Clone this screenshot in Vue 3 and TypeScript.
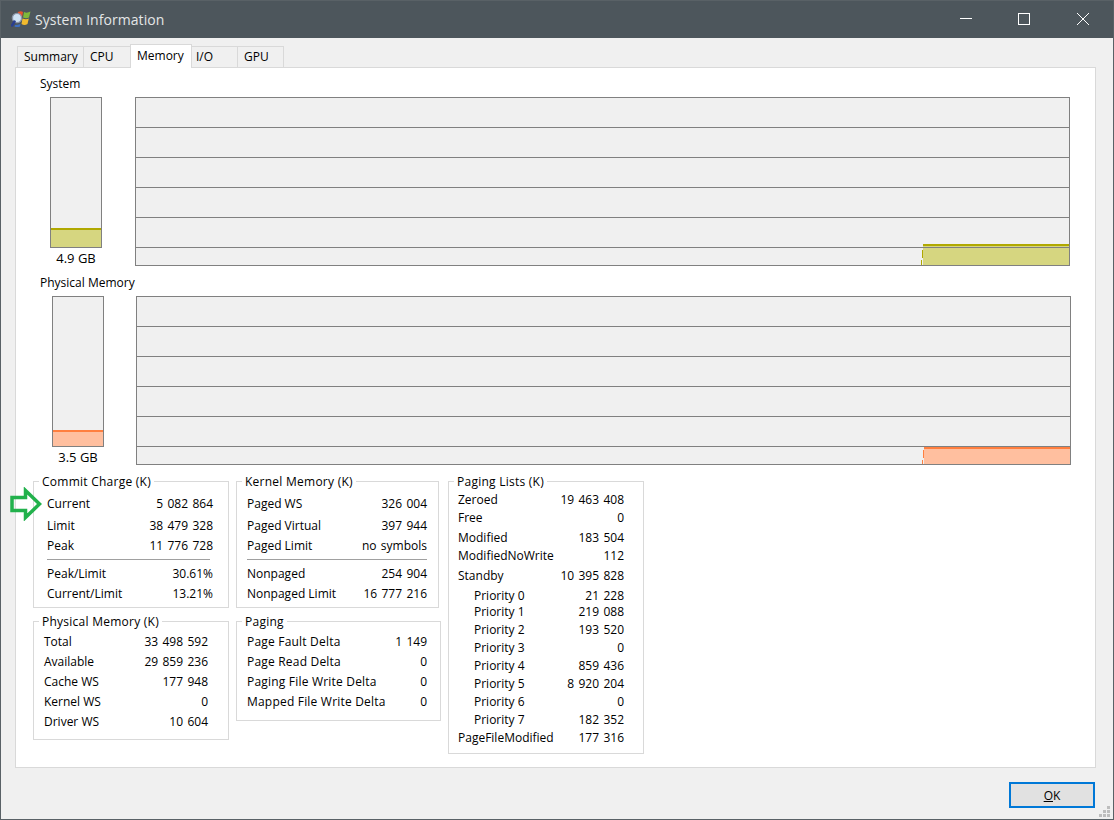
<script setup lang="ts">
interface Row { label?: string; value?: string; gap: number; indent?: boolean; sep?: boolean }
interface Group { title: string; cls: string; rows: Row[] }

const tabs = [
  { name: 'Summary', width: 67, pad: 6 },
  { name: 'CPU', width: 48, pad: 6 },
  { name: 'Memory', width: 62, pad: 6, active: true },
  { name: 'I/O', width: 47, pad: 4 },
  { name: 'GPU', width: 47, pad: 6 },
]

const column1: Group[] = [
  {
    title: 'Commit Charge (K)', cls: 'commit',
    rows: [
      { label: 'Current', value: '5 082 864', gap: 6 },
      { label: 'Limit', value: '38 479 328', gap: 6 },
      { label: 'Peak', value: '11 776 728', gap: 4 },
      { sep: true, gap: 5 },
      { label: 'Peak/Limit', value: '30.61%', gap: 6 },
      { label: 'Current/Limit', value: '13.21%', gap: 4 },
    ],
  },
  {
    title: 'Physical Memory (K)', cls: 'physical',
    rows: [
      { label: 'Total', value: '33 498 592', gap: 4 },
      { label: 'Available', value: '29 859 236', gap: 4 },
      { label: 'Cache WS', value: '177 948', gap: 4 },
      { label: 'Kernel WS', value: '0', gap: 4 },
      { label: 'Driver WS', value: '10 604', gap: 4 },
    ],
  },
]

const column2: Group[] = [
  {
    title: 'Kernel Memory (K)', cls: 'kernel',
    rows: [
      { label: 'Paged WS', value: '326 004', gap: 6 },
      { label: 'Paged Virtual', value: '397 944', gap: 6 },
      { label: 'Paged Limit', value: 'no symbols', gap: 4 },
      { sep: true, gap: 5 },
      { label: 'Nonpaged', value: '254 904', gap: 6 },
      { label: 'Nonpaged Limit', value: '16 777 216', gap: 4 },
    ],
  },
  {
    title: 'Paging', cls: 'paging',
    rows: [
      { label: 'Page Fault Delta', value: '1 149', gap: 4 },
      { label: 'Page Read Delta', value: '0', gap: 4 },
      { label: 'Paging File Write Delta', value: '0', gap: 4 },
      { label: 'Mapped File Write Delta', value: '0', gap: 4 },
    ],
  },
]

const column3: Group[] = [
  {
    title: 'Paging Lists (K)', cls: 'lists',
    rows: [
      { label: 'Zeroed', value: '19 463 408', gap: 2 },
      { label: 'Free', value: '0', gap: 2 },
      { label: 'Modified', value: '183 504', gap: 4 },
      { label: 'ModifiedNoWrite', value: '112', gap: 2 },
      { label: 'Standby', value: '10 395 828', gap: 4 },
      { label: 'Priority 0', value: '21 228', gap: 4, indent: true },
      { label: 'Priority 1', value: '219 088', gap: 0, indent: true },
      { label: 'Priority 2', value: '193 520', gap: 2, indent: true },
      { label: 'Priority 3', value: '0', gap: 2, indent: true },
      { label: 'Priority 4', value: '859 436', gap: 2, indent: true },
      { label: 'Priority 5', value: '8 920 204', gap: 2, indent: true },
      { label: 'Priority 6', value: '0', gap: 2, indent: true },
      { label: 'Priority 7', value: '182 352', gap: 2, indent: true },
      { label: 'PageFileModified', value: '177 316', gap: 2 },
    ],
  },
]

const columns = [column1, column2, column3]
const graphLines = [1, 2, 3, 4, 5, 6]
const grip = [[8, 0], [8, 4], [4, 4], [8, 8], [4, 8], [0, 8]]

const sections = [
  { title: 'System', cls: 'sys', gauge: '4.9 GB', fill: 19, top: 146, body: 147, step1: 152, step2: 162 },
  { title: 'Physical Memory', cls: 'phys', gauge: '3.5 GB', fill: 16, top: 150, body: 151, step1: 153, step2: 163 },
]
</script>

<template>
  <div class="window">
    <header class="titlebar">
      <svg class="appicon" width="20" height="20" viewBox="0 0 20 20">
        <path d="M7 3 Q10 1.5 12 3 L11 8.5 Q9 7.5 6 8.5 Z" fill="#e8552d" />
        <path d="M13 3 Q16 4.5 19.5 2.5 L18 8.5 Q15 10 12 8.5 Z" fill="#7fb93a" />
        <path d="M11.5 9.5 Q15 11 17.8 9.5 L16.5 15 Q13.5 16.8 10.5 15 Z" fill="#f2bb2e" />
        <circle cx="6" cy="9" r="4.6" fill="#cfe3f5" stroke="#8c96a8" stroke-width="1.4" />
        <path d="M3.5 12.5 L1 16.5" stroke="#2b3f8f" stroke-width="2.6" stroke-linecap="round" />
        <path d="M4 16 Q7 16 9.5 15 L9 17.5 Q6 18.5 3.5 17.5 Z" fill="#3d6fc4" />
      </svg>
      <span class="title">System Information</span>
      <div class="controls">
        <button class="ctl" type="button" aria-label="Minimize">
          <svg width="14" height="14" viewBox="0 0 14 14"><path d="M1 6.5H13" stroke="#fff" /></svg>
        </button>
        <button class="ctl" type="button" aria-label="Maximize">
          <svg width="14" height="14" viewBox="0 0 14 14"><rect x="1.5" y="1.5" width="11" height="11" fill="none" stroke="#fff" /></svg>
        </button>
        <button class="ctl" type="button" aria-label="Close">
          <svg width="14" height="14" viewBox="0 0 14 14"><path d="M1 1L13 13M13 1L1 13" stroke="#fff" /></svg>
        </button>
      </div>
    </header>

    <main class="body">
      <nav class="tabs">
        <div
          v-for="t in tabs"
          :key="t.name"
          class="tab"
          :class="{ active: t.active }"
          :style="{ width: t.width + 'px', paddingLeft: t.pad + 'px' }"
        >{{ t.name }}</div>
      </nav>

      <section class="page">
        <div v-for="s in sections" :key="s.title" class="section" :class="s.cls">
          <div class="section-title">{{ s.title }}</div>
          <div class="meter-row">
            <div class="gauge-col">
              <div class="gauge">
                <div class="gauge-fill" :style="{ height: s.fill + 'px' }"></div>
              </div>
              <div class="gauge-label">{{ s.gauge }}</div>
            </div>
            <div class="graph">
              <svg class="plot" width="933" height="167" viewBox="0 0 933 167" shape-rendering="crispEdges">
                <rect class="plot-body" x="787" :y="s.body" width="146" :height="167 - s.body" />
                <rect class="plot-line" x="787" :y="s.top" width="146" height="2" />
                <rect class="plot-line" x="786" :y="s.step1" width="1" height="8" />
                <rect class="plot-line" x="785" :y="s.step2" width="1" :height="167 - s.step2" />
              </svg>
              <div v-for="n in graphLines" :key="n" class="graph-row"></div>
            </div>
          </div>
        </div>

        <div class="groups">
          <div v-for="(col, i) in columns" :key="i" class="group-col">
            <div v-for="g in col" :key="g.title" class="group" :class="g.cls">
              <div class="group-title">{{ g.title }}</div>
              <template v-for="(r, j) in g.rows" :key="j">
                <div v-if="r.sep" class="sep" :style="{ marginTop: r.gap + 'px' }"></div>
                <div v-else class="row" :class="{ indent: r.indent }" :style="{ marginTop: r.gap + 'px' }">
                  <span class="key">{{ r.label }}</span>
                  <span class="val">{{ r.value }}</span>
                </div>
              </template>
            </div>
          </div>
        </div>

        <svg class="arrow" width="32" height="34" viewBox="0 0 32 34">
          <path d="M2 10.5H15.5V3.5L29.5 17L15.5 30.5V23.5H2Z" fill="none" stroke="#22b14c" stroke-width="3.5" />
        </svg>
      </section>

      <footer class="footer">
        <button class="ok" type="button"><u>O</u>K</button>
      </footer>
    </main>

    <svg class="grip" width="11" height="11" viewBox="0 0 11 11" shape-rendering="crispEdges">
      <rect v-for="(d, i) in grip" :key="i" :x="d[0]" :y="d[1]" width="3" height="3" fill="#bdbdbd" />
    </svg>
  </div>
</template>

<style>
html, body { margin: 0; padding: 0; background: #f0f0f0; }
</style>

<style scoped>
.window {
  position: relative;
  width: 1114px;
  height: 820px;
  box-sizing: border-box;
  display: flex;
  flex-direction: column;
  border: 1px solid #596166;
  border-top: 0;
  background: #f0f0f0;
  font: 12px/16px "Open Sans", "Liberation Sans", sans-serif;
  color: #000;
  overflow: hidden;
}
.titlebar {
  height: 38px;
  flex: none;
  display: flex;
  align-items: center;
  background: #4d565c;
  border-top: 1px solid #596166;
  box-sizing: border-box;
  padding-left: 10px;
}
.appicon { flex: none; margin-top: -1px; }
.title {
  margin-left: 4px;
  font-size: 14px;
  color: #e4e6e7;
  letter-spacing: 0.05px;
}
.controls {
  margin-left: auto;
  margin-right: 1px;
  align-self: flex-start;
  display: flex;
  gap: 1px;
}
.ctl {
  width: 58px;
  height: 36px;
  padding: 0;
  border: 0;
  background: none;
  display: flex;
  align-items: center;
  justify-content: center;
}
.ctl:first-child { margin-right: -1px; }
.body {
  flex: 1;
  display: flex;
  flex-direction: column;
  padding: 6px 17px 0 14px;
  min-height: 0;
}
.tabs {
  height: 23px;
  flex: none;
  display: flex;
  align-items: flex-end;
  padding-left: 2px;
}
.tab {
  height: 21px;
  box-sizing: border-box;
  border: 1px solid #d9d9d9;
  border-bottom: 0;
  margin-left: -1px;
  padding-top: 2px;
  background: #f0f0f0;
}
.tab:first-child { margin-left: 0; }
.tab.active {
  height: 24px;
  margin-bottom: -1px;
  background: #fff;
  padding-top: 3px;
  position: relative;
  z-index: 1;
}
.page {
  position: relative;
  height: 701px;
  flex: none;
  box-sizing: border-box;
  border: 1px solid #d9d9d9;
  background: #fff;
  padding: 8px 0 0 17px;
}
.section-title { margin-left: 7px; }
.phys { margin-top: 9px; }
.meter-row {
  display: flex;
  margin-top: 5px;
  gap: 33px;
}
.sys .meter-row { margin-left: 17px; }
.phys .meter-row { margin-left: 19px; gap: 32px; }
.gauge-col { width: 52px; flex: none; display: flex; flex-direction: column; align-items: center; }
.gauge {
  width: 100%;
  height: 151px;
  box-sizing: border-box;
  border: 1px solid #808080;
  background: #f0f0f0;
  display: flex;
  flex-direction: column;
  justify-content: flex-end;
}
.gauge-fill { box-sizing: border-box; border-top: 2px solid; }
.sys .gauge-fill { background: #d6d680; border-color: #b0a800; }
.phys .gauge-fill { background: #ffbf9f; border-color: #ff7f3f; }
.gauge-label { margin-top: 2px; font-size: 13px; white-space: nowrap; }
.graph {
  position: relative;
  width: 935px;
  height: 169px;
  flex: none;
  box-sizing: border-box;
  border: 1px solid #808080;
  background: #f0f0f0;
  display: flex;
  flex-direction: column;
}
.plot { position: absolute; left: 0; top: 0; }
.sys .plot-body { fill: #d6d680; }
.sys .plot-line { fill: #b0a800; }
.phys .plot-body { fill: #ffbf9f; }
.phys .plot-line { fill: #ff7f3f; }
.graph-row {
  position: relative;
  height: 30px;
  flex: none;
  box-sizing: border-box;
  border-bottom: 1px solid #808080;
}
.graph-row:last-child { border-bottom: 0; height: auto; flex: 1; }
.groups {
  display: flex;
  gap: 7px;
  margin-top: 16px;
}
.group-col { display: flex; flex-direction: column; gap: 13px; }
.group {
  box-sizing: border-box;
  border: 1px solid #d9d9d9;
}
.group-title {
  width: fit-content;
  margin-top: -8px;
  padding: 0 3px;
  height: 16px;
  background: #fff;
  white-space: nowrap;
  letter-spacing: 0.25px;
}
.row {
  display: flex;
  justify-content: space-between;
  height: 16px;
  white-space: nowrap;
}
.row.indent { padding-left: 16px; }
.val { word-spacing: 1.25px; }
.paging .key { letter-spacing: 0.2px; }
.sep { height: 1px; background: #a0a0a0; }
.commit { width: 196px; height: 127px; padding: 0 15px 0 13px; }
.commit .group-title { margin-left: -8px; }
.commit .sep { margin-right: 3px; }
.physical { width: 196px; height: 119px; padding: 0 20px 0 10px; }
.physical .group-title { margin-left: -5px; }
.kernel { width: 203px; height: 127px; padding: 0 11px 0 10px; }
.paging { width: 205px; height: 100px; padding: 0 13px 0 10px; }
.paging .group-title, .kernel .group-title { margin-left: -5px; }
.lists { width: 196px; height: 273px; padding: 0 19px 0 9px; }
.lists .group-title { margin-left: -4px; }
.arrow { position: absolute; left: -6px; top: 419px; }
.footer {
  display: flex;
  justify-content: flex-end;
  padding: 14px 1px 0 0;
}
.ok {
  width: 86px;
  height: 26px;
  box-sizing: border-box;
  border: 2px solid #0078d7;
  background: #e1e1e1;
  padding: 1px 0 0;
  font: inherit;
  color: #000;
}
.grip { position: absolute; right: 3px; bottom: 2px; }
</style>
